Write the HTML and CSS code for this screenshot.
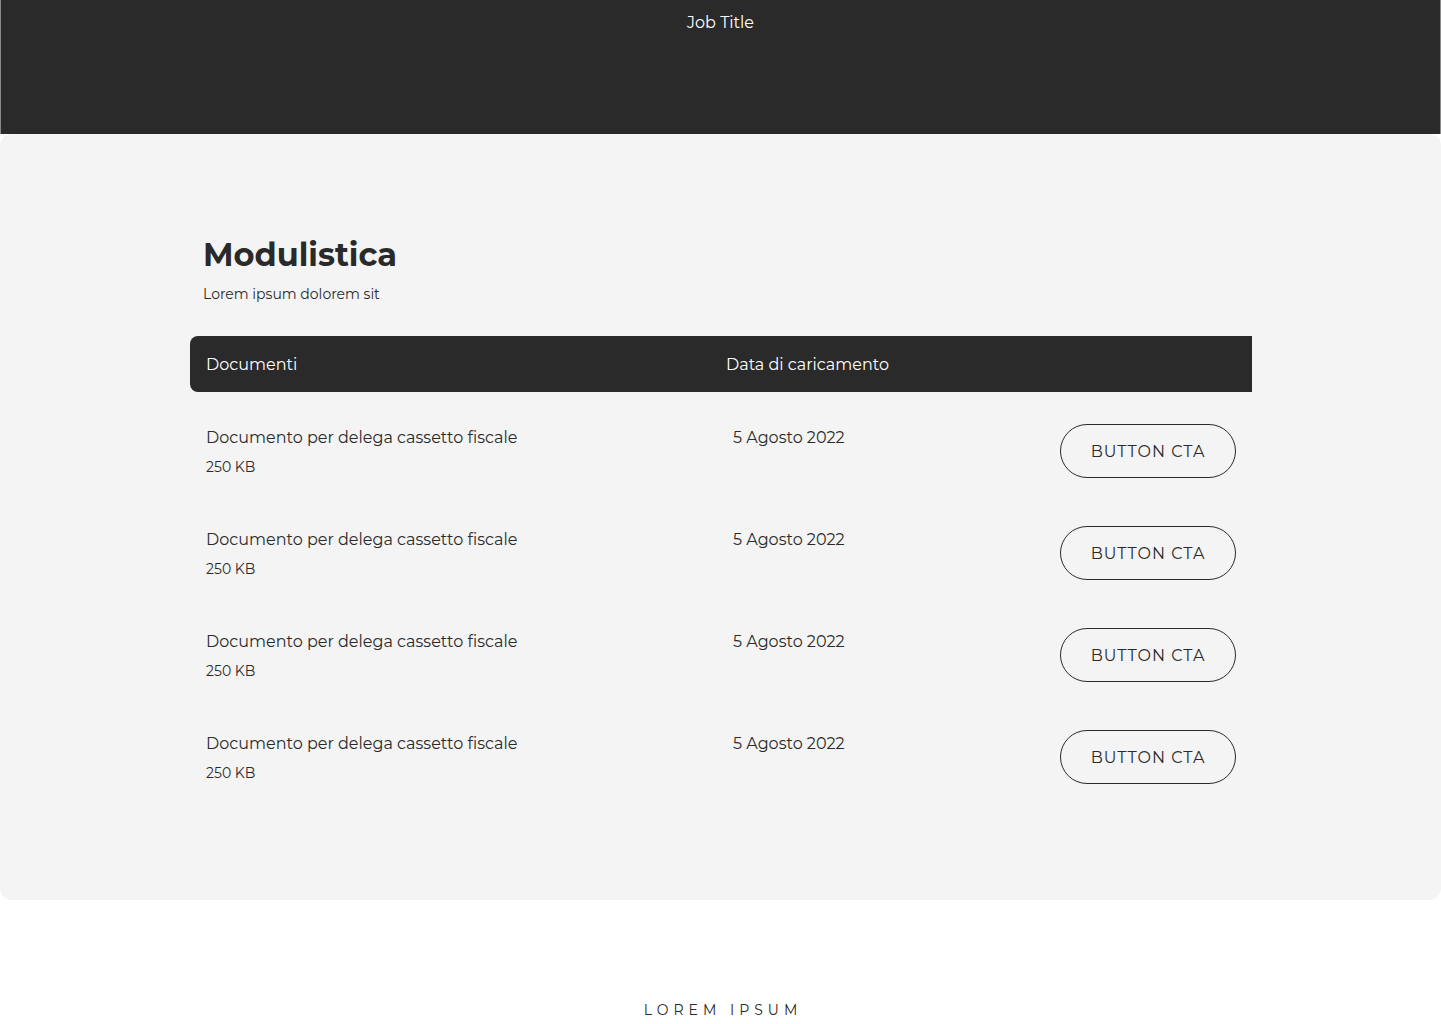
FILE: index.html
```html
<!DOCTYPE html>
<html lang="it">
  <head>
    <meta charset="UTF-8" />
    <meta name="viewport" content="width=device-width, initial-scale=1.0" />
    <title>Modulistica</title>
    <link rel="stylesheet" href="styles.css">
  </head>

  <body>
    <header class="top-bar">
      <p class="job-title">Job Title</p>
    </header>

    <main class="panel">
      <div class="docs">
        <h1 class="docs-title">Modulistica</h1>
        <p class="docs-sub">Lorem ipsum dolorem sit</p>

        <div class="table-head">
          <span class="col-doc">Documenti</span>
          <span class="col-date">Data di caricamento</span>
        </div>

        <div class="row">
          <div class="col-doc">
            <p class="doc-name">Documento per delega cassetto fiscale</p>
            <p class="doc-size">250 KB</p>
          </div>
          <p class="col-date row-date">5 Agosto 2022</p>
          <button class="cta">BUTTON CTA</button>
        </div>

        <div class="row">
          <div class="col-doc">
            <p class="doc-name">Documento per delega cassetto fiscale</p>
            <p class="doc-size">250 KB</p>
          </div>
          <p class="col-date row-date">5 Agosto 2022</p>
          <button class="cta">BUTTON CTA</button>
        </div>

        <div class="row">
          <div class="col-doc">
            <p class="doc-name">Documento per delega cassetto fiscale</p>
            <p class="doc-size">250 KB</p>
          </div>
          <p class="col-date row-date">5 Agosto 2022</p>
          <button class="cta">BUTTON CTA</button>
        </div>

        <div class="row">
          <div class="col-doc">
            <p class="doc-name">Documento per delega cassetto fiscale</p>
            <p class="doc-size">250 KB</p>
          </div>
          <p class="col-date row-date">5 Agosto 2022</p>
          <button class="cta">BUTTON CTA</button>
        </div>
      </div>
    </main>

    <footer class="footer">
      <p class="footer-label">LOREM IPSUM</p>
    </footer>
  </body>
</html>
```

FILE: styles.css
```css
body {
  margin: 0;
  font-family: "Montserrat", "Open Sans", sans-serif;
  background: #ffffff;
  color: #2a2a2a;
}

p {
  margin: 0;
}

.top-bar {
  height: 134px;
  background-color: #2a2a2a;
  border-left: 1px solid #8a8a8a;
  border-right: 1px solid #8a8a8a;
  box-sizing: border-box;
  display: flex;
  justify-content: center;
}

.job-title {
  color: #ffffff;
  font-size: 16px;
  margin-top: 12px;
  line-height: 22px;
}

.panel {
  background-color: #f4f4f4;
  border-radius: 12px;
  height: 766px;
  box-sizing: border-box;
  padding-top: 101px;
}

.docs {
  width: 1062px;
  margin-left: 190px;
}

.docs-title {
  margin: 0 0 0 13px;
  font-size: 32px;
  font-weight: 700;
  line-height: 40px;
}

.docs-sub {
  margin: 9px 0 0 13px;
  font-size: 14px;
  line-height: 20px;
}

.table-head {
  margin-top: 32px;
  height: 56px;
  background-color: #2a2a2a;
  border-radius: 8px 0 0 8px;
  color: #ffffff;
  display: flex;
  align-items: center;
  font-size: 16px;
}

.col-doc {
  width: 520px;
  padding-left: 16px;
}

.col-date {
  width: 320px;
}

.row {
  display: flex;
  align-items: flex-start;
  padding-top: 32px;
  height: 102px;
  box-sizing: border-box;
}

.doc-name {
  font-size: 16px;
  line-height: 24px;
  margin-top: 2px;
}

.doc-size {
  font-size: 14px;
  line-height: 20px;
  margin-top: 7px;
}

.row-date {
  font-size: 16px;
  line-height: 24px;
  margin-top: 2px;
  padding-left: 7px;
  width: 313px;
}

.cta {
  margin-left: auto;
  margin-right: 16px;
  width: 176px;
  height: 54px;
  border: 1px solid #2a2a2a;
  border-radius: 27px;
  background: transparent;
  font-family: inherit;
  font-size: 16px;
  letter-spacing: 1px;
  color: #2a2a2a;
  cursor: pointer;
}

.footer {
  display: flex;
  justify-content: center;
  padding-top: 100px;
}

.footer-label {
  font-size: 14px;
  letter-spacing: 5px;
  line-height: 20px;
  padding-left: 5px;
}
```
